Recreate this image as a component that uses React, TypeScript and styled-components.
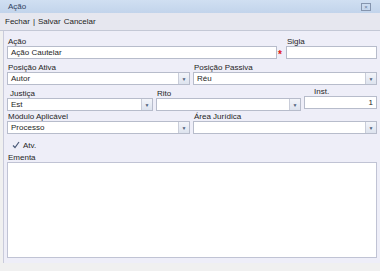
import React from "react";
import styled, { createGlobalStyle } from "styled-components";

const Global = createGlobalStyle`
  html, body { margin: 0; padding: 0; }
  body { background: #f0f0f0; font-family: "Liberation Sans", Arial, sans-serif; font-size: 8px; color: #1e1e1e; }
`;

const Window = styled.div`
  width: 380px;
  height: 271px;
  display: flex;
  flex-direction: column;
  background: #f0f0f0;
  overflow: hidden;
`;

const TitleBar = styled.div`
  height: 13px;
  display: flex;
  align-items: center;
  justify-content: space-between;
  padding: 0 9px 0 8px;
  background: linear-gradient(#d0dff2, #c2d4eb);
  color: #2f3f5e;
  font-size: 8px;
`;

const CloseBox = styled.div`
  width: 8px;
  height: 6px;
  border: 1px solid #8595ae;
  display: flex;
  align-items: center;
  justify-content: center;
  color: #6a7d9a;
  font-size: 6px;
  line-height: 6px;
`;

const Toolbar = styled.div`
  height: 17px;
  display: flex;
  align-items: center;
  padding: 0 5px;
  gap: 3px;
  background: #e6e7ef;
  border-bottom: 1px solid #c4c8d6;
  font-size: 8px;
  color: #1e1e1e;
`;

const Body = styled.div`
  height: 226px;
  margin-left: 3px;
  background: #eeeef8;
  border-left: 1px solid #c9cbdb;
  padding: 6px 3px 0 3px;
  display: flex;
  flex-direction: column;
`;

const Row = styled.div<{ cols: string; top?: number }>`
  display: grid;
  grid-template-columns: ${(p) => p.cols};
  column-gap: 3px;
  margin-top: ${(p) => p.top ?? 0}px;
`;

const Field = styled.div<{ drop?: number }>`
  display: flex;
  flex-direction: column;
  margin-top: ${(p) => p.drop ?? 0}px;
`;

const Label = styled.div<{ indent?: number; top?: number }>`
  height: 9px;
  line-height: 9px;
  padding-left: ${(p) => p.indent ?? 1}px;
  margin-top: ${(p) => p.top ?? 0}px;
  font-size: 8px;
  color: #1e1e1e;
  white-space: nowrap;
`;

const Box = styled.div<{ right?: boolean; grow?: boolean }>`
  height: 11px;
  flex: ${(p) => (p.grow ? 1 : "none")};
  background: #fff;
  border: 1px solid #b7bccb;
  display: flex;
  align-items: center;
  justify-content: ${(p) => (p.right ? "flex-end" : "flex-start")};
  padding: 0 3px;
  font-size: 8px;
  color: #1e1e1e;
`;

const ComboBox = styled(Box)`
  padding-right: 0;
  justify-content: space-between;
`;

const DropBtn = styled.div`
  width: 10px;
  height: 11px;
  border-left: 1px solid #c9cdd9;
  background: linear-gradient(#f3f5fa, #dde3ee);
  display: flex;
  align-items: center;
  justify-content: center;
  color: #4f5f7a;
  font-size: 5px;
`;

const Asterisk = styled.span`
  color: #e01515;
  font-size: 10px;
  font-weight: bold;
  align-self: center;
  line-height: 10px;
  width: 6px;
  padding-top: 4px;
  text-align: center;
`;

const Inline = styled.div`
  display: flex;
  align-items: stretch;
`;

const CheckRow = styled.div`
  display: flex;
  align-items: center;
  gap: 3px;
  padding-left: 5px;
  margin-top: 6px;
  height: 10px;
`;

const Check = styled.div`
  width: 8px;
  height: 8px;
  display: flex;
  align-items: center;
  justify-content: center;
`;

const TextArea = styled.div`
  height: 94px;
  background: #fff;
  border: 1px solid #c0c3d4;
`;

function Combo({ value }: { value?: string }) {
  return (
    <ComboBox>
      <span>{value}</span>
      <DropBtn>▼</DropBtn>
    </ComboBox>
  );
}

export default function App() {
  return (
    <>
      <Global />
      <Window>
        <TitleBar>
          <span>Ação</span>
          <CloseBox>×</CloseBox>
        </TitleBar>
        <Toolbar>
          <span>Fechar</span>
          <span>|</span>
          <span>Salvar</span>
          <span>Cancelar</span>
        </Toolbar>
        <Body>
          <Row cols="1fr 91px">
            <Field>
              <Label>Ação</Label>
              <Inline>
                <Box grow>Ação Cautelar</Box>
                <Asterisk>*</Asterisk>
              </Inline>
            </Field>
            <Field>
              <Label>Sigla</Label>
              <Box />
            </Field>
          </Row>
          <Row cols="183px 1fr" top={3}>
            <Field>
              <Label>Posição Ativa</Label>
              <Combo value="Autor" />
            </Field>
            <Field>
              <Label>Posição Passiva</Label>
              <Combo value="Réu" />
            </Field>
          </Row>
          <Row cols="146px 145px 1fr" top={2}>
            <Field drop={2}>
              <Label indent={3}>Justiça</Label>
              <Combo value="Est" />
            </Field>
            <Field drop={2}>
              <Label>Rito</Label>
              <Combo />
            </Field>
            <Field>
              <Label indent={10}>Inst.</Label>
              <Box right>1</Box>
            </Field>
          </Row>
          <Row cols="183px 1fr" top={1}>
            <Field>
              <Label>Módulo Aplicável</Label>
              <Combo value="Processo" />
            </Field>
            <Field>
              <Label>Área Jurídica</Label>
              <Combo />
            </Field>
          </Row>
          <CheckRow>
            <Check>
              <svg width="8" height="8" viewBox="0 0 8 8">
                <path d="M1 4.5 L3 6.5 L7 1" fill="none" stroke="#4a5a78" strokeWidth="1.2" />
              </svg>
            </Check>
            <span>Atv.</span>
          </CheckRow>
          <Label top={3}>Ementa</Label>
          <TextArea />
        </Body>
      </Window>
    </>
  );
}
